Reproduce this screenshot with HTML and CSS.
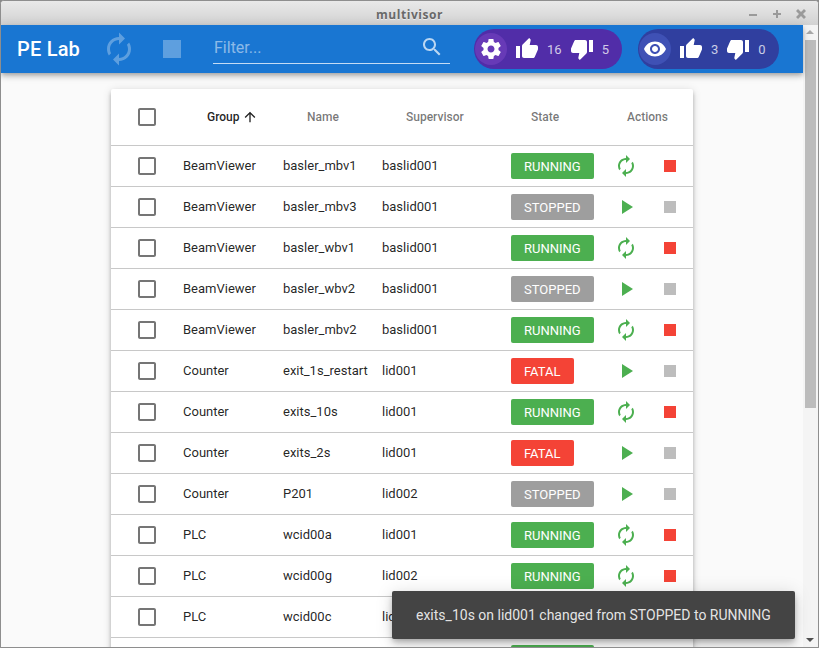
FILE: index.html
```html
<!DOCTYPE html>
<html lang="en">
<head>
<meta charset="utf-8">
<title>multivisor</title>
<link rel="stylesheet" href="styles.css">
</head>
<body>
<svg class="defs" aria-hidden="true">
  <symbol id="i-renew" viewBox="0 0 24 24"><path d="M12 6v3l4-4-4-4v3c-4.42 0-8 3.58-8 8 0 1.57.46 3.03 1.24 4.26L6.7 14.8c-.45-.83-.7-1.79-.7-2.8 0-3.31 2.69-6 6-6zm6.76 1.74L17.3 9.2c.44.84.7 1.79.7 2.8 0 3.31-2.69 6-6 6v-3l-4 4 4 4v-3c4.42 0 8-3.58 8-8 0-1.57-.46-3.03-1.24-4.26z"/></symbol>
  <symbol id="i-stop" viewBox="0 0 24 24"><path d="M6 6h12v12H6z"/></symbol>
  <symbol id="i-play" viewBox="0 0 24 24"><path d="M8 5v14l11-7z"/></symbol>
  <symbol id="i-search" viewBox="0 0 24 24"><path d="M15.5 14h-.79l-.28-.27C15.41 12.59 16 11.11 16 9.5 16 5.91 13.09 3 9.5 3S3 5.91 3 9.5 5.91 16 9.5 16c1.61 0 3.09-.59 4.23-1.57l.27.28v.79l5 4.99L20.49 19l-4.99-5zm-6 0C7.01 14 5 11.99 5 9.5S7.01 5 9.5 5 14 7.01 14 9.5 11.99 14 9.5 14z"/></symbol>
  <symbol id="i-gear" viewBox="0 0 24 24"><path d="M19.43 12.98c.04-.32.07-.64.07-.98s-.03-.66-.07-.98l2.11-1.65c.19-.15.24-.42.12-.64l-2-3.46c-.12-.22-.39-.3-.61-.22l-2.49 1c-.52-.4-1.08-.73-1.69-.98l-.38-2.65C14.46 2.18 14.25 2 14 2h-4c-.25 0-.46.18-.49.42l-.38 2.65c-.61.25-1.17.59-1.69.98l-2.49-1c-.23-.09-.49 0-.61.22l-2 3.46c-.13.22-.07.49.12.64l2.11 1.65c-.04.32-.07.65-.07.98s.03.66.07.98l-2.11 1.65c-.19.15-.24.42-.12.64l2 3.46c.12.22.39.3.61.22l2.49-1c.52.4 1.08.73 1.69.98l.38 2.65c.03.24.24.42.49.42h4c.25 0 .46-.18.49-.42l.38-2.65c.61-.25 1.17-.59 1.69-.98l2.49 1c.23.09.49 0 .61-.22l2-3.46c.12-.22.07-.49-.12-.64l-2.11-1.65zM12 15.5c-1.93 0-3.5-1.57-3.5-3.5s1.57-3.5 3.5-3.5 3.5 1.57 3.5 3.5-1.57 3.5-3.5 3.5z"/></symbol>
  <symbol id="i-eye" viewBox="0 0 24 24"><path d="M12 4.5C7 4.5 2.73 7.61 1 12c1.73 4.39 6 7.5 11 7.5s9.27-3.11 11-7.5c-1.73-4.39-6-7.5-11-7.5zM12 17c-2.76 0-5-2.24-5-5s2.24-5 5-5 5 2.24 5 5-2.24 5-5 5zm0-8c-1.66 0-3 1.34-3 3s1.34 3 3 3 3-1.34 3-3-1.34-3-3-3z"/></symbol>
  <symbol id="i-up" viewBox="0 0 24 24"><path d="M1 21h4V9H1v12zm22-11c0-1.1-.9-2-2-2h-6.31l.95-4.57.03-.32c0-.41-.17-.79-.44-1.06L14.17 1 7.59 7.59C7.22 7.95 7 8.45 7 9v10c0 1.1.9 2 2 2h9c.83 0 1.54-.5 1.84-1.22l3.02-7.05c.09-.23.14-.47.14-.73v-2z"/></symbol>
  <symbol id="i-down" viewBox="0 0 24 24"><path d="M15 3H6c-.83 0-1.54.5-1.84 1.22l-3.02 7.05c-.09.23-.14.47-.14.73v2c0 1.1.9 2 2 2h6.31l-.95 4.57-.03.32c0 .41.17.79.44 1.06L9.83 23l6.59-6.59c.36-.36.58-.86.58-1.41V5c0-1.1-.9-2-2-2zm4 0v12h4V3h-4z"/></symbol>
  <symbol id="i-box" viewBox="0 0 24 24"><path d="M19 5v14H5V5h14m0-2H5c-1.1 0-2 .9-2 2v14c0 1.1.9 2 2 2h14c1.1 0 2-.9 2-2V5c0-1.1-.9-2-2-2z"/></symbol>
  <symbol id="i-arrow" viewBox="0 0 24 24"><path d="M4 12l1.41 1.41L11 7.83V20h2V7.83l5.58 5.59L20 12l-8-8-8 8z"/></symbol>
</svg>

<div class="window">
  <div class="titlebar">
    <span class="title">multivisor</span>
    <div class="controls">
      <svg class="ctl" viewBox="0 0 10 10"><path d="M1 5h8v2H1z"/></svg>
      <svg class="ctl" viewBox="0 0 10 10"><path d="M4 1h2v3h3v2H6v3H4V6H1V4h3z"/></svg>
      <svg class="ctl" viewBox="0 0 10 10"><path d="M2 0l3 3 3-3 2 2-3 3 3 3-2 2-3-3-3 3-2-2 3-3-3-3z"/></svg>
    </div>
  </div>
  <div class="client">
    <div class="viewport">
      <header class="toolbar">
        <span class="brand">PE Lab</span>
        <span class="tool tool-renew"><svg class="i36"><use href="#i-renew"/></svg></span>
        <span class="tool tool-stop"><svg class="i36"><use href="#i-stop"/></svg></span>
        <div class="filter">
          <span class="filter-text">Filter...</span>
          <svg class="i24 filter-icon"><use href="#i-search"/></svg>
        </div>
        <div class="pill pill-purple">
          <span class="disc disc-purple"><svg class="i24"><use href="#i-gear"/></svg></span>
          <svg class="i24"><use href="#i-up"/></svg><span class="num">16</span>
          <svg class="i24"><use href="#i-down"/></svg><span class="num">5</span>
        </div>
        <div class="pill pill-indigo">
          <span class="disc disc-indigo"><svg class="i24"><use href="#i-eye"/></svg></span>
          <svg class="i24"><use href="#i-up"/></svg><span class="num">3</span>
          <svg class="i24"><use href="#i-down"/></svg><span class="num">0</span>
        </div>
      </header>
      <main class="page">
        <section class="table">
          <div class="row head">
            <span class="cell-check"><svg class="i24 box"><use href="#i-box"/></svg></span>
            <span class="th th-active">Group<svg class="i16"><use href="#i-arrow"/></svg></span>
            <span class="th">Name</span>
            <span class="th">Supervisor</span>
            <span class="th th-state">State</span>
            <span class="th th-actions">Actions</span>
          </div>

          <div class="row">
            <span class="cell-check"><svg class="i24 box"><use href="#i-box"/></svg></span>
            <span>BeamViewer</span><span>basler_mbv1</span><span>baslid001</span>
            <span><b class="badge running">RUNNING</b></span>
            <span class="act"><svg class="i24 green"><use href="#i-renew"/></svg></span>
            <span class="act"><svg class="i24 red"><use href="#i-stop"/></svg></span>
          </div>
          <div class="row">
            <span class="cell-check"><svg class="i24 box"><use href="#i-box"/></svg></span>
            <span>BeamViewer</span><span>basler_mbv3</span><span>baslid001</span>
            <span><b class="badge stopped">STOPPED</b></span>
            <span class="act"><svg class="i24 green"><use href="#i-play"/></svg></span>
            <span class="act"><svg class="i24 off"><use href="#i-stop"/></svg></span>
          </div>
          <div class="row">
            <span class="cell-check"><svg class="i24 box"><use href="#i-box"/></svg></span>
            <span>BeamViewer</span><span>basler_wbv1</span><span>baslid001</span>
            <span><b class="badge running">RUNNING</b></span>
            <span class="act"><svg class="i24 green"><use href="#i-renew"/></svg></span>
            <span class="act"><svg class="i24 red"><use href="#i-stop"/></svg></span>
          </div>
          <div class="row">
            <span class="cell-check"><svg class="i24 box"><use href="#i-box"/></svg></span>
            <span>BeamViewer</span><span>basler_wbv2</span><span>baslid001</span>
            <span><b class="badge stopped">STOPPED</b></span>
            <span class="act"><svg class="i24 green"><use href="#i-play"/></svg></span>
            <span class="act"><svg class="i24 off"><use href="#i-stop"/></svg></span>
          </div>
          <div class="row">
            <span class="cell-check"><svg class="i24 box"><use href="#i-box"/></svg></span>
            <span>BeamViewer</span><span>basler_mbv2</span><span>baslid001</span>
            <span><b class="badge running">RUNNING</b></span>
            <span class="act"><svg class="i24 green"><use href="#i-renew"/></svg></span>
            <span class="act"><svg class="i24 red"><use href="#i-stop"/></svg></span>
          </div>
          <div class="row">
            <span class="cell-check"><svg class="i24 box"><use href="#i-box"/></svg></span>
            <span>Counter</span><span>exit_1s_restart</span><span>lid001</span>
            <span><b class="badge fatal">FATAL</b></span>
            <span class="act"><svg class="i24 green"><use href="#i-play"/></svg></span>
            <span class="act"><svg class="i24 off"><use href="#i-stop"/></svg></span>
          </div>
          <div class="row">
            <span class="cell-check"><svg class="i24 box"><use href="#i-box"/></svg></span>
            <span>Counter</span><span>exits_10s</span><span>lid001</span>
            <span><b class="badge running">RUNNING</b></span>
            <span class="act"><svg class="i24 green"><use href="#i-renew"/></svg></span>
            <span class="act"><svg class="i24 red"><use href="#i-stop"/></svg></span>
          </div>
          <div class="row">
            <span class="cell-check"><svg class="i24 box"><use href="#i-box"/></svg></span>
            <span>Counter</span><span>exits_2s</span><span>lid001</span>
            <span><b class="badge fatal">FATAL</b></span>
            <span class="act"><svg class="i24 green"><use href="#i-play"/></svg></span>
            <span class="act"><svg class="i24 off"><use href="#i-stop"/></svg></span>
          </div>
          <div class="row">
            <span class="cell-check"><svg class="i24 box"><use href="#i-box"/></svg></span>
            <span>Counter</span><span>P201</span><span>lid002</span>
            <span><b class="badge stopped">STOPPED</b></span>
            <span class="act"><svg class="i24 green"><use href="#i-play"/></svg></span>
            <span class="act"><svg class="i24 off"><use href="#i-stop"/></svg></span>
          </div>
          <div class="row">
            <span class="cell-check"><svg class="i24 box"><use href="#i-box"/></svg></span>
            <span>PLC</span><span>wcid00a</span><span>lid001</span>
            <span><b class="badge running">RUNNING</b></span>
            <span class="act"><svg class="i24 green"><use href="#i-renew"/></svg></span>
            <span class="act"><svg class="i24 red"><use href="#i-stop"/></svg></span>
          </div>
          <div class="row">
            <span class="cell-check"><svg class="i24 box"><use href="#i-box"/></svg></span>
            <span>PLC</span><span>wcid00g</span><span>lid002</span>
            <span><b class="badge running">RUNNING</b></span>
            <span class="act"><svg class="i24 green"><use href="#i-renew"/></svg></span>
            <span class="act"><svg class="i24 red"><use href="#i-stop"/></svg></span>
          </div>
          <div class="row">
            <span class="cell-check"><svg class="i24 box"><use href="#i-box"/></svg></span>
            <span>PLC</span><span>wcid00c</span><span>lid001</span>
            <span><b class="badge running">RUNNING</b></span>
            <span class="act"><svg class="i24 green"><use href="#i-renew"/></svg></span>
            <span class="act"><svg class="i24 red"><use href="#i-stop"/></svg></span>
          </div>
          <div class="row">
            <span class="cell-check"><svg class="i24 box"><use href="#i-box"/></svg></span>
            <span>PLC</span><span>wcid00d</span><span>lid001</span>
            <span><b class="badge running">RUNNING</b></span>
            <span class="act"><svg class="i24 green"><use href="#i-renew"/></svg></span>
            <span class="act"><svg class="i24 red"><use href="#i-stop"/></svg></span>
          </div>
        </section>
      </main>
    </div>
    <div class="scrollbar">
      <span class="sb-arrow sb-up"></span>
      <div class="sb-track"><div class="sb-thumb"></div></div>
      <span class="sb-arrow sb-down"></span>
    </div>
  </div>
  <div class="snackbar">exits_10s on lid001 changed from STOPPED to RUNNING</div>
</div>
</body>
</html>
```

FILE: styles.css
```css
* { box-sizing: border-box; }
html, body { margin: 0; height: 100%; overflow: hidden; background: #8a8a8a; }
.defs { display: none; }
svg { fill: currentColor; display: block; flex: none; }
.i16 { width: 16px; height: 16px; }
.i24 { width: 24px; height: 24px; }
.i36 { width: 36px; height: 36px; }

.window {
  position: relative;
  width: 819px;
  height: 648px;
  display: flex;
  flex-direction: column;
  overflow: hidden;
  border: 1px solid #8e8e8e;
  border-radius: 4px 4px 0 0;
  font-family: Roboto, sans-serif;
  background: #fafafa;
}

.titlebar {
  flex: none;
  height: 24px;
  display: flex;
  align-items: center;
  justify-content: center;
  position: relative;
  padding-top: 3px;
  background: linear-gradient(#e9e9e9, #d2d2d2);
}
.title {
  font-family: "Open Sans", sans-serif;
  font-weight: 700;
  font-size: 12px;
  letter-spacing: .55px;
  color: #696969;
  text-shadow: 0 1px rgba(255,255,255,.55);
}
.controls {
  position: absolute;
  right: 12px;
  top: 8px;
  display: flex;
  gap: 14px;
  color: #9a9a9a;
}
.ctl { width: 10px; height: 10px; }

.client { flex: 1; display: flex; min-height: 0; }
.viewport { flex: 1; display: flex; flex-direction: column; min-width: 0; position: relative; }

.toolbar {
  flex: none;
  height: 48px;
  display: flex;
  align-items: center;
  background: #1976d2;
  color: #fff;
  box-shadow: 0 2px 4px -1px rgba(0,0,0,.2), 0 4px 5px 0 rgba(0,0,0,.14), 0 1px 10px 0 rgba(0,0,0,.12);
  position: relative;
  z-index: 2;
}
.brand {
  width: 94px;
  padding-left: 16px;
  font-size: 20px;
  font-weight: 500;
  letter-spacing: .2px;
}
.tool { display: flex; justify-content: center; color: rgba(255,255,255,.3); }
.tool-renew { width: 48px; }
.tool-stop { width: 48px; margin-left: 5px; margin-right: 17px; }

.filter {
  width: 237px;
  height: 32px;
  margin-top: -2px;
  display: flex;
  align-items: center;
  justify-content: space-between;
  border-bottom: 1px solid rgba(255,255,255,.75);
  padding-left: 1px;
  padding-right: 6px;
}
.filter-text { font-size: 16px; color: rgba(255,255,255,.5); }
.filter-icon { color: rgba(255,255,255,.7); margin-top: -2px; }

.pill {
  height: 40px;
  border-radius: 20px;
  display: flex;
  align-items: center;
  gap: 8px;
  padding: 0 13px 0 1px;
  margin-left: 24px;
}
.pill + .pill { margin-left: 16px; }
.pill-purple { background: #512da8; }
.pill-indigo { background: #303f9f; }
.disc {
  width: 32px;
  height: 32px;
  border-radius: 50%;
  display: flex;
  align-items: center;
  justify-content: center;
}
.disc-purple { background: #673ab7; }
.disc-indigo { background: #3f51b5; }
.num { font-size: 13px; color: rgba(255,255,255,.75); }

.page { flex: 1; min-height: 0; overflow: hidden; background: #fafafa; padding-top: 16px; }
.table {
  width: 582px;
  margin: 0 auto;
  background: #fff;
  border-radius: 2px;
  box-shadow: 0 2px 4px -1px rgba(0,0,0,.2), 0 4px 5px 0 rgba(0,0,0,.14), 0 1px 10px 0 rgba(0,0,0,.12);
}
.row {
  display: grid;
  grid-template-columns: 72px 100px 99px 129px 96px 38px 48px;
  align-items: center;
  height: 41px;
  border-bottom: 1px solid #c8c8c8;
  font-size: 13px;
  line-height: 14px;
  color: rgba(0,0,0,.87);
}
.head { height: 57px; }
.cell-check { display: flex; justify-content: center; }
.box { color: #757575; }
.th {
  padding-left: 24px;
  font-size: 12px;
  font-weight: 500;
  color: rgba(0,0,0,.54);
}
.th-active { display: flex; align-items: center; gap: 2px; color: rgba(0,0,0,.87); }
.th-state { padding-left: 20px; }
.th-actions { padding-left: 20px; grid-column: span 2; }
.act { display: flex; justify-content: center; }
.act:last-child { justify-content: flex-end; padding-right: 11px; }
.green { color: #4caf50; }
.red { color: #f44336; }
.off { color: #bdbdbd; }
.badge {
  display: block;
  width: fit-content;
  height: 26px;
  line-height: 27px;
  padding: 0 13px;
  border-radius: 2px;
  font-size: 13px;
  font-weight: 400;
  color: #fff;
}
.running { background: #4caf50; }
.stopped { background: #9e9e9e; }
.fatal { background: #f44336; }

.scrollbar {
  flex: none;
  width: 15px;
  display: flex;
  flex-direction: column;
  background: #f4f4f4;
  align-items: center;
}
.sb-track { flex: 1; width: 100%; padding: 0 2px; }
.sb-thumb { height: 368px; background: #bcbcbc; }
.sb-arrow { flex: none; height: 15px; width: 100%; position: relative; }
.sb-arrow::after {
  content: "";
  position: absolute;
  left: 3px;
  border-left: 4px solid transparent;
  border-right: 4px solid transparent;
}
.sb-up::after { top: 5px; border-bottom: 4px solid #a8a8a8; }
.sb-down::after { top: 6px; border-top: 4px solid #505050; }

.snackbar {
  position: absolute;
  left: 391px;
  top: 590px;
  width: 403px;
  height: 48px;
  display: flex;
  align-items: center;
  padding-left: 24px;
  background: #444;
  border-radius: 2px;
  font-size: 14px;
  color: rgba(255,255,255,.87);
  box-shadow: 0 3px 5px -1px rgba(0,0,0,.2), 0 6px 10px 0 rgba(0,0,0,.14), 0 1px 18px 0 rgba(0,0,0,.12);
  z-index: 5;
}
```
